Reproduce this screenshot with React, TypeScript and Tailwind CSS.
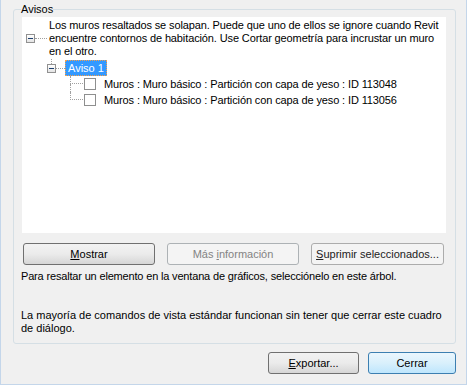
import React from "react";

const Expander = () => (
  <span className="w-[9px] h-[9px] border border-[#919191] bg-linear-to-b from-white to-[#e4e4e4] flex items-center justify-center shrink-0">
    <span className="w-[5px] h-[1px] bg-[#1c3f6e]" />
  </span>
);

const ChildRow = ({ label, last }: { label: string; last?: boolean }) => (
  <div className="flex h-[16px] items-center">
    <div className="w-[13px] h-[16px] flex flex-col shrink-0">
      <div className="h-[8px] border-l border-b border-dotted border-[#a0a0a0]" />
      {!last && <div className="h-[8px] border-l border-dotted border-[#a0a0a0]" />}
    </div>
    <span className="ml-[1px] w-[12px] h-[12px] border border-[#8e8f8f] bg-white shrink-0" />
    <span className="ml-[8px] whitespace-nowrap tracking-[-0.12px]">{label}</span>
  </div>
);

const WinButton = ({
  children,
  width,
  variant = "normal",
}: {
  children: React.ReactNode;
  width: string;
  variant?: "normal" | "disabled" | "flat" | "default";
}) => {
  const styles = {
    normal: "border-[#707070] bg-linear-to-b from-[#f2f2f2] via-[#ebebeb] to-[#d6d6d6] text-black",
    disabled: "border-[#adb2b5] bg-[#f4f4f4] text-[#838383]",
    flat: "border-[#acacac] bg-[#f4f4f4] text-[#222]",
    default: "border-[#3c7fb1] bg-linear-to-b from-[#eaf6fd] via-[#d9f0fc] to-[#bee6fd] text-black",
  }[variant];
  return (
    <button
      className={`${width} h-[22px] rounded-[3px] border flex items-center justify-center text-[11px] leading-[13px] ${styles}`}
    >
      <span className="whitespace-pre">{children}</span>
    </button>
  );
};

export default function App() {
  return (
    <div className="w-[467px] h-[385px] bg-[#f0f0f0] border-l border-r border-b border-[#c4d6ea] pl-[12px] pr-[10px] font-['Liberation_Sans',Arial,sans-serif] text-[11px] leading-[13px] text-black flex flex-col">
      <fieldset className="mt-[3px] w-[443px] border border-[#d5dfe5] rounded-[3px] pl-[8px] pr-[9px] pt-[1px] pb-[8px]">
        <legend className="-ml-[1px] px-0 text-[11px] leading-[13px]">Avisos</legend>

        <div className="bg-white h-[216px] pt-[2px]">
          <div className="flex items-center">
            <div className="w-[26px] pl-[4px] flex items-center shrink-0">
              <Expander />
              <div className="w-[12px] border-t border-dotted border-[#a0a0a0]" />
            </div>
            <div className="ml-[1px] whitespace-nowrap tracking-[-0.12px]">
              Los muros resaltados se solapan. Puede que uno de ellos se ignore cuando Revit
              <br />
              encuentre contornos de habitación. Use Cortar geometría para incrustar un muro
              <br />
              en el otro.
            </div>
          </div>

          <div className="mt-[2px] flex h-[16px] items-center pl-[25px]">
            <div className="relative">
              <Expander />
              <div className="absolute left-[4px] -top-[5px] h-[5px] border-l border-dotted border-[#a0a0a0]" />
            </div>
            <div className="w-[9px] border-t border-dotted border-[#a0a0a0]" />
            <span className="h-[16px] px-[2px] bg-[#3399ff] text-white flex items-center border border-dotted border-[#f5a04a]">
              Aviso 1
            </span>
          </div>

          <div className="ml-[48px]">
            <ChildRow label="Muros : Muro básico : Partición con capa de yeso : ID 113048" />
            <ChildRow label="Muros : Muro básico : Partición con capa de yeso : ID 113056" last />
          </div>
        </div>

        <div className="mt-[10px] pl-[1px] flex gap-[12px]">
          <WinButton width="w-[132px]">
            <span className="underline">M</span>ostrar
          </WinButton>
          <WinButton width="w-[132px]" variant="disabled">
            Más <span className="underline">i</span>nformación
          </WinButton>
          <WinButton width="w-[133px]" variant="flat">
            <span className="underline">S</span>uprimir seleccionados...
          </WinButton>
        </div>

        <p className="mt-[5px] -ml-[1px] tracking-[-0.17px]">
          Para resaltar un elemento en la ventana de gráficos, selecciónelo en este árbol.
        </p>

        <p className="mt-[26px] -ml-[1px]">
          La mayoría de comandos de vista estándar funcionan sin tener que cerrar este cuadro
          <br />
          de diálogo.
        </p>
      </fieldset>

      <div className="mt-[8px] flex justify-end gap-[9px]">
        <WinButton width="w-[91px]">
          <span className="underline">E</span>xportar...
        </WinButton>
        <WinButton width="w-[88px]" variant="default">
          Cerrar
        </WinButton>
      </div>
    </div>
  );
}
